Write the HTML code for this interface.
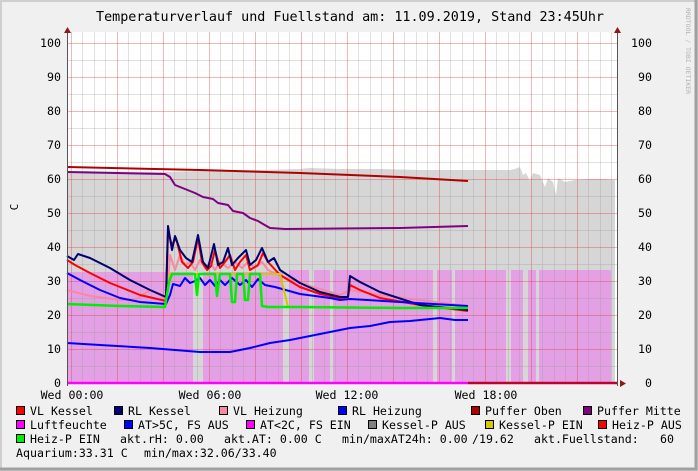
<!DOCTYPE html>
<html><head><meta charset="utf-8"><style>
html,body{margin:0;padding:0;background:#f0f0f0}
svg{display:block}
text{font-family:"DejaVu Sans Mono","Liberation Mono",monospace;fill:#000;white-space:pre}
</style></head><body>
<svg width="698" height="471" viewBox="0 0 698 471" xmlns="http://www.w3.org/2000/svg">
<rect x="0" y="0" width="698" height="471" fill="#f0f0f0"/>
<path d="M0 0H698V471H0Z" fill="none" stroke="#cfcfcf" stroke-width="4"/>
<path d="M696 0V469H0" fill="none" stroke="#a0a0a0" stroke-width="3"/>
<text x="350" y="21" font-size="13.4" text-anchor="middle">Temperaturverlauf und Fuellstand am: 11.09.2019, Stand 23:45Uhr</text>
<text x="686" y="8" font-size="6.5" style="fill:#b0b0b0" transform="rotate(90 686 8)">RRDTOOL / TOBI OETIKER</text>
<text x="18" y="207" font-size="11" transform="rotate(-90 18 207)" text-anchor="middle">C</text>
<rect x="67" y="32" width="550" height="351" fill="#fff"/>
<polygon fill="#d6d6d6" points="67,383 67,171 165,172 200,171 260,170 300,169 310,168 340,169 380,169 420,170 440,170 470,170 510,170 515,169 520,167 523,175 526,173 530,181 533,173 540,175 545,187 548,178 553,182 556,195 558,178 565,182 575,180 590,179 605,179 615,180 615,383"/>
<g fill="#e4a0e4">
<rect x="68" y="272" width="125" height="111"/>
<rect x="203" y="272" width="80" height="111"/>
<rect x="289" y="270" width="20" height="113"/>
<rect x="314" y="270" width="16" height="113"/>
<rect x="333" y="270" width="100" height="113"/>
<rect x="437" y="270" width="15" height="113"/>
<rect x="455" y="270" width="51" height="113"/>
<rect x="511" y="270" width="12" height="113"/>
<rect x="528" y="270" width="8" height="113"/>
<rect x="539" y="270" width="72" height="113"/>
</g>
<g stroke="#999" stroke-opacity="0.3" stroke-width="1">
<path d="M82.5 32V383M94.5 32V383M105.5 32V383M128.5 32V383M140.5 32V383M151.5 32V383M174.5 32V383M186.5 32V383M197.5 32V383M220.5 32V383M232.5 32V383M243.5 32V383M266.5 32V383M278.5 32V383M289.5 32V383M312.5 32V383M324.5 32V383M335.5 32V383M358.5 32V383M370.5 32V383M381.5 32V383M404.5 32V383M416.5 32V383M427.5 32V383M450.5 32V383M462.5 32V383M473.5 32V383M496.5 32V383M508.5 32V383M519.5 32V383M542.5 32V383M554.5 32V383M565.5 32V383M588.5 32V383M600.5 32V383M611.5 32V383"/>
<path d="M67 60.5H617M67 94.5H617M67 128.5H617M67 162.5H617M67 196.5H617M67 230.5H617M67 264.5H617M67 298.5H617M67 332.5H617M67 366.5H617"/>
</g>
<g stroke="#e03030" stroke-opacity="0.35" stroke-width="1">
<path d="M71.5 32V383M117.5 32V383M163.5 32V383M209.5 32V383M255.5 32V383M301.5 32V383M347.5 32V383M393.5 32V383M439.5 32V383M485.5 32V383M531.5 32V383M577.5 32V383"/>
<path d="M67 43.5H617M67 77.5H617M67 111.5H617M67 145.5H617M67 179.5H617M67 213.5H617M67 247.5H617M67 281.5H617M67 315.5H617M67 349.5H617"/>
</g>
<g fill="none" stroke-linejoin="round">
<polyline stroke="#b00000" stroke-width="2" points="67,167 200,170 300,173 400,177 468,181"/>
<polyline stroke="#800080" stroke-width="2" points="67,172 165,174 170,177 175,185 185,189 195,193 203,197 213,199 218,203 228,205 233,211 243,213 250,218 258,221 263,224 270,228 285,229 400,228 468,226"/>
<polyline stroke="#fa88a0" stroke-width="2" points="67,290 90,296 120,300 135,300 150,290 160,295 167,300 170,255 175,270 180,255 185,265 190,262 195,270 200,260 205,268 210,262 215,270 220,262 228,268 235,262 242,268 248,262 255,268 262,262 268,270 272,272 300,283 340,295 350,290 380,295 420,300 468,306"/>
<polyline stroke="#ff0000" stroke-width="2" points="67,260 75,265 90,273 110,283 140,295 166,301 168,232 172,245 176,238 182,262 188,268 193,262 198,238 202,262 207,270 211,266 215,250 220,268 225,262 230,255 235,270 240,262 246,255 250,270 258,265 263,253 268,262 280,275 300,287 320,294 340,298 348,297 350,285 360,290 380,298 420,305 468,311"/>
<polyline stroke="#00006e" stroke-width="2" points="67,256 74,260 78,254 90,258 110,268 130,280 150,290 166,297 168,226 172,250 175,236 180,250 186,258 192,262 198,235 203,262 208,268 214,244 218,265 223,262 228,248 232,265 238,258 246,250 250,265 256,260 262,248 268,262 274,258 280,270 300,283 320,292 340,297 348,297 350,276 360,282 380,292 420,305 468,310"/>
<polyline stroke="#0000ff" stroke-width="2" points="67,273 80,280 100,290 120,298 140,302 166,304 170,295 173,284 180,286 185,278 190,283 195,281 200,278 205,285 210,280 215,286 220,280 225,285 232,278 240,285 246,280 252,287 258,279 265,285 275,287 300,294 330,298 340,300 350,299 400,302 468,306"/>
<polyline stroke="#0000ff" stroke-width="2" points="67,343 100,345 150,348 200,352 230,352 250,348 270,343 290,340 310,336 330,332 350,328 370,326 390,322 410,321 430,319 440,318 455,320 468,320"/>
<polyline stroke="#d4c800" stroke-width="2" points="165,307 170,274 280,274 288,307"/>
<polyline stroke="#00ee00" stroke-width="2.5" points="67,304 120,306 165,307 169,282 172,274 195,274 197,295 199,274 215,274 217,296 220,274 230,274 232,302 235,302 237,274 243,274 245,300 248,300 250,274 260,274 262,306 268,307 300,307 400,308 468,308"/>
<line x1="67" y1="383" x2="468" y2="383" stroke="#ff00ff" stroke-width="2.5"/>
<line x1="468" y1="383" x2="618" y2="383" stroke="#c00030" stroke-width="2.5"/>
</g>
<line x1="67.5" y1="30" x2="67.5" y2="386" stroke="#555"/>
<line x1="617.5" y1="30" x2="617.5" y2="386" stroke="#555"/>
<polygon points="64,33 71,33 67.5,27" fill="#8b1a1a"/>
<polygon points="614,33 621,33 617.5,27" fill="#8b1a1a"/>
<polygon points="620,380 620,387 626,383.5" fill="#8b1a1a"/>
<g font-size="11.6" text-anchor="end">
<text x="61" y="47">100</text><text x="61" y="81">90</text><text x="61" y="115">80</text><text x="61" y="149">70</text><text x="61" y="183">60</text><text x="61" y="217">50</text><text x="61" y="251">40</text><text x="61" y="285">30</text><text x="61" y="319">20</text><text x="61" y="353">10</text><text x="61" y="387">0</text>
<text x="652" y="47">100</text><text x="652" y="81">90</text><text x="652" y="115">80</text><text x="652" y="149">70</text><text x="652" y="183">60</text><text x="652" y="217">50</text><text x="652" y="251">40</text><text x="652" y="285">30</text><text x="652" y="319">20</text><text x="652" y="353">10</text><text x="652" y="387">0</text>
</g>
<g font-size="11.6" text-anchor="middle">
<text x="72" y="399">Wed 00:00</text><text x="210" y="399">Wed 06:00</text><text x="347" y="399">Wed 12:00</text><text x="486" y="399">Wed 18:00</text>
</g>
<g stroke="#000" stroke-width="1">
<rect x="16.5" y="406.5" width="8" height="8" fill="#ff0000"/>
<rect x="114.5" y="406.5" width="8" height="8" fill="#00006e"/>
<rect x="219.5" y="406.5" width="8" height="8" fill="#fa88a0"/>
<rect x="338.5" y="406.5" width="8" height="8" fill="#0000ff"/>
<rect x="471.5" y="406.5" width="8" height="8" fill="#b00000"/>
<rect x="583.5" y="406.5" width="8" height="8" fill="#800080"/>
<rect x="16.5" y="420.5" width="8" height="8" fill="#ff00ff"/>
<rect x="124.5" y="420.5" width="8" height="8" fill="#0000ff"/>
<rect x="246.5" y="420.5" width="8" height="8" fill="#ff00ff"/>
<rect x="368.5" y="420.5" width="8" height="8" fill="#808080"/>
<rect x="485.5" y="420.5" width="8" height="8" fill="#d4c800"/>
<rect x="598.5" y="420.5" width="8" height="8" fill="#ff0000"/>
<rect x="16.5" y="434.5" width="8" height="8" fill="#00ee00"/>
</g>
<g font-size="11.6">
<text x="30" y="415">VL Kessel</text>
<text x="128" y="415">RL Kessel</text>
<text x="233" y="415">VL Heizung</text>
<text x="352" y="415">RL Heizung</text>
<text x="485" y="415">Puffer Oben</text>
<text x="597" y="415">Puffer Mitte</text>
<text x="30" y="429">Luftfeuchte</text>
<text x="138" y="429">AT&gt;5C, FS AUS</text>
<text x="260" y="429">AT&lt;2C, FS EIN</text>
<text x="382" y="429">Kessel-P AUS</text>
<text x="499" y="429">Kessel-P EIN</text>
<text x="612" y="429">Heiz-P AUS</text>
<text x="30" y="443">Heiz-P EIN</text>
<text x="120" y="443">akt.rH: 0.00</text>
<text x="224" y="443">akt.AT: 0.00 C</text>
<text x="342" y="443">min/maxAT24h: 0.00</text>
<text x="472" y="443">/19.62</text>
<text x="534" y="443">akt.Fuellstand:</text>
<text x="660" y="443">60</text>
<text x="16" y="457">Aquarium:33.31 C</text>
<text x="144" y="457">min/max:32.06/33.40</text>
</g>
</svg>
</body></html>
